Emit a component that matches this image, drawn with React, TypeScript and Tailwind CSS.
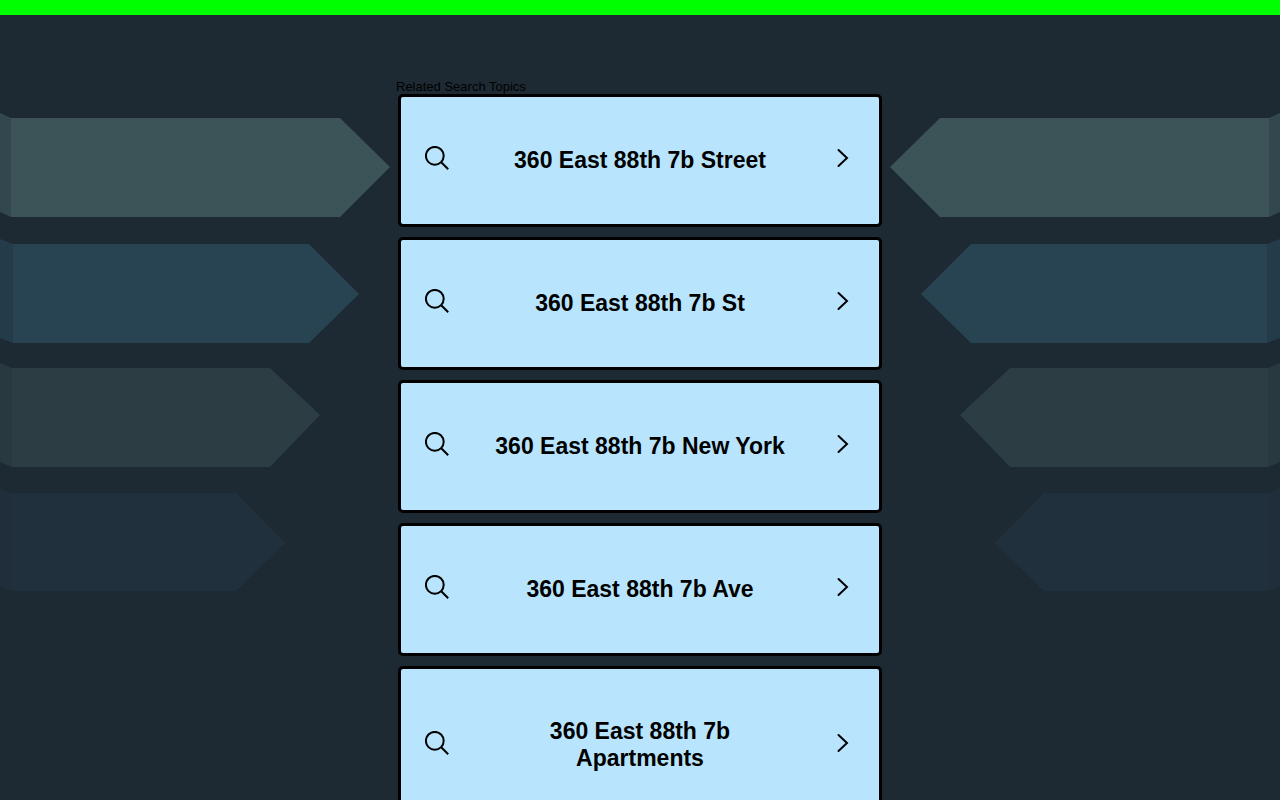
const topics = [
  "360 East 88th 7b Street",
  "360 East 88th 7b St",
  "360 East 88th 7b New York",
  "360 East 88th 7b Ave",
  "360 East 88th 7b Apartments",
];

const arrows = [
  { top: 118, bottom: 217, start: 11, end: 340, tip: 390, mid: 167, fill: "#3c5357", side: "#33474f" },
  { top: 244, bottom: 343, start: 13, end: 309, tip: 359, mid: 294, fill: "#284452", side: "#243c4a" },
  { top: 368, bottom: 467, start: 12, end: 270, tip: 320, mid: 415, fill: "#2c3e44", side: "#283940" },
  { top: 493, bottom: 591, start: 12, end: 236, tip: 285, mid: 543, fill: "#20303c", side: "#1f2e3a" },
];

function Arrows({ className }: { className: string }) {
  return (
    <svg className={className} width="400" height="640" viewBox="0 0 400 640" aria-hidden="true">
      {arrows.map((a) => (
        <g key={a.top}>
          <polygon
            points={`0,${a.top - 5} ${a.start},${a.top} ${a.start},${a.bottom} 0,${a.bottom - 5}`}
            fill={a.side}
          />
          <polygon
            points={`${a.start},${a.top} ${a.end},${a.top} ${a.tip},${a.mid} ${a.end},${a.bottom} ${a.start},${a.bottom}`}
            fill={a.fill}
          />
        </g>
      ))}
    </svg>
  );
}

function SearchIcon() {
  return (
    <svg className="mb-1 size-6 shrink-0" viewBox="0 0 24 24" fill="none" stroke="#000" strokeWidth="2" aria-hidden="true">
      <circle cx="9.8" cy="9.8" r="8.9" />
      <path d="M16 16 23.2 23.2" />
    </svg>
  );
}

function ChevronIcon() {
  return (
    <svg className="mb-1 size-6 shrink-0" viewBox="0 0 24 24" fill="none" stroke="#000" strokeWidth="2" strokeLinecap="round" aria-hidden="true">
      <path d="M7.5 4 16 12 7.5 20" />
    </svg>
  );
}

export default function App() {
  return (
    <div className="relative min-h-screen overflow-hidden bg-[#1e2a33] font-['Liberation_Sans',Arial,sans-serif] text-black">
      <Arrows className="absolute top-0 left-0" />
      <Arrows className="absolute top-0 right-0 -scale-x-100" />
      <div className="h-[15px] bg-[#00ff00]" />
      <main className="relative mx-auto max-w-[488px] px-0.5 pt-16 pb-10">
        <h1 className="-ml-0.5 text-[13px] leading-[15px]">Related Search Topics</h1>
        <ul className="flex flex-col gap-2.5">
          {topics.map((topic) => (
            <li key={topic}>
              <a
                href="#"
                className="flex items-center justify-between rounded-[5px] border-3 border-black bg-[#b8e5fd] px-6 pt-[49px] pb-[50px]"
              >
                <SearchIcon />
                <span className="max-w-[300px] text-center text-[23px] leading-[27px] font-bold">{topic}</span>
                <ChevronIcon />
              </a>
            </li>
          ))}
        </ul>
      </main>
    </div>
  );
}
